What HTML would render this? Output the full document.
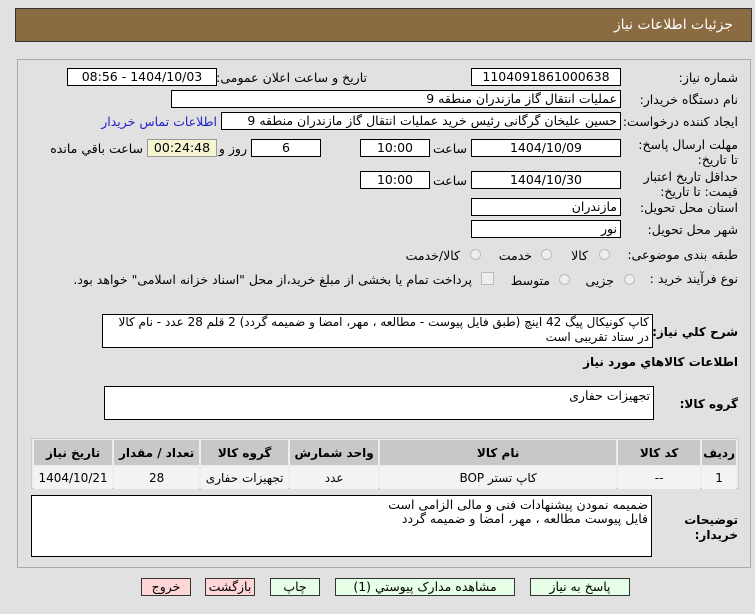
<!DOCTYPE html>
<html><head><meta charset="utf-8"><style>
body{margin:0;width:755px;height:614px;background:#e1e1e1;font-family:"DejaVu Sans","Liberation Sans",sans-serif;font-size:12.5px;color:#000;position:relative;overflow:hidden;direction:rtl}
.a{position:absolute}
.hdr{left:15px;top:8px;width:737px;height:34px;background:#8b6b42;border:1px solid #333;box-sizing:border-box;color:#fff;font-size:14px}
.panel{left:17px;top:59px;width:734px;height:509px;border:1px solid #aaa;box-sizing:border-box}
.box{background:#fff;border:1px solid #000;box-sizing:border-box;height:18px;line-height:16px;padding:0 3px;white-space:nowrap;overflow:hidden}
.c{text-align:center}
.lbl{white-space:nowrap;line-height:16px}
.b{font-weight:bold;font-size:12px}
.radio{width:11px;height:11px;border:1px solid #bbb;border-radius:50%;background:#eee;box-sizing:border-box}
table{border-collapse:separate;border-spacing:2px;font-size:12px}
td{text-align:center;background:#f3f3f3;height:20px}
th{background:#c8c8c8;height:23px;font-weight:bold}
.btn{height:18px;border:1px solid #333;box-sizing:border-box;text-align:center;line-height:16px;background:#e6ffe6}
.red{background:#ffd6d6}
</style></head><body>
<div class="a hdr"><span class="a" style="right:18px;top:8px">جزئیات اطلاعات نیاز</span></div>
<div class="a panel"></div>

<div class="a lbl" style="right:17px;top:70px">شماره نیاز:</div>
<div class="a box c" style="left:471px;top:68px;width:150px">1104091861000638</div>
<div class="a lbl" style="right:388px;top:70px">تاریخ و ساعت اعلان عمومی:</div>
<div class="a box c" style="left:67px;top:68px;width:150px">1404/10/03 - 08:56</div>

<div class="a lbl" style="right:17px;top:92px">نام دستگاه خریدار:</div>
<div class="a box" style="left:171px;top:90px;width:450px">عملیات انتقال گاز مازندران منطقه 9</div>

<div class="a lbl" style="right:17px;top:114px">ایجاد کننده درخواست:</div>
<div class="a box" style="left:221px;top:112px;width:400px">حسین علیخان گرگانی رئیس خرید عملیات انتقال گاز مازندران منطقه 9</div>
<div class="a lbl" style="right:538px;top:114px;color:#2222cc">اطلاعات تماس خریدار</div>

<div class="a lbl" style="right:17px;top:137px;width:110px;line-height:15px;white-space:normal">مهلت ارسال پاسخ: تا تاریخ:</div>
<div class="a box c" style="left:471px;top:139px;width:150px">1404/10/09</div>
<div class="a lbl" style="right:288px;top:141px">ساعت</div>
<div class="a box c" style="left:360px;top:139px;width:70px">10:00</div>
<div class="a box c" style="left:251px;top:139px;width:70px">6</div>
<div class="a lbl" style="right:508px;top:141px">روز و</div>
<div class="a box c" style="left:147px;top:139px;width:70px;background:#f5f5d2;border-color:#999">00:24:48</div>
<div class="a lbl" style="right:612px;top:141px">ساعت باقي مانده</div>

<div class="a lbl" style="right:17px;top:169px;width:110px;line-height:15px;white-space:normal">حداقل تاریخ اعتبار قیمت: تا تاریخ:</div>
<div class="a box c" style="left:471px;top:171px;width:150px">1404/10/30</div>
<div class="a lbl" style="right:288px;top:173px">ساعت</div>
<div class="a box c" style="left:360px;top:171px;width:70px">10:00</div>

<div class="a lbl" style="right:17px;top:200px">استان محل تحویل:</div>
<div class="a box" style="left:471px;top:198px;width:150px">مازندران</div>
<div class="a lbl" style="right:17px;top:222px">شهر محل تحویل:</div>
<div class="a box" style="left:471px;top:220px;width:150px">نور</div>

<div class="a lbl" style="right:17px;top:247px">طبقه بندی موضوعی:</div>
<div class="a radio" style="left:599px;top:249px"></div><div class="a lbl" style="right:167px;top:248px">کالا</div>
<div class="a radio" style="left:541px;top:249px"></div><div class="a lbl" style="right:223px;top:248px">خدمت</div>
<div class="a radio" style="left:470px;top:249px"></div><div class="a lbl" style="right:295px;top:248px">کالا/خدمت</div>

<div class="a lbl" style="right:17px;top:271px">نوع فرآیند خرید :</div>
<div class="a radio" style="left:624px;top:274px"></div><div class="a lbl" style="right:141px;top:273px">جزیی</div>
<div class="a radio" style="left:559px;top:274px"></div><div class="a lbl" style="right:205px;top:273px">متوسط</div>
<div class="a" style="left:481px;top:272px;width:11px;height:11px;border:1px solid #bbb;background:#eee"></div>
<div class="a lbl" style="right:283px;top:272px">پرداخت تمام یا بخشی از مبلغ خرید،از محل "اسناد خزانه اسلامی" خواهد بود.</div>

<div class="a lbl b" style="right:17px;top:324px">شرح کلي نیاز:</div>
<div class="a box" style="left:102px;top:314px;width:551px;height:34px;white-space:normal;line-height:15px;font-size:12px">کاپ کونیکال پیگ 42 اینچ (طبق فایل پیوست - مطالعه ، مهر، امضا و ضمیمه گردد) 2 قلم 28 عدد - نام کالا در ستاد تقریبی است</div>
<div class="a lbl b" style="right:17px;top:354px">اطلاعات کالاهاي مورد نیاز</div>

<div class="a lbl b" style="right:17px;top:396px">گروه کالا:</div>
<div class="a box" style="left:104px;top:386px;width:550px;height:34px;line-height:18px">تجهیزات حفاری</div>

<div class="a" style="left:31px;top:438px;width:708px;height:51px;border:1px solid #ccc;box-sizing:border-box;background:#eee">
<table style="width:100%;margin:-1px 0 0 0">
<tr><th style="width:27px">ردیف</th><th style="width:80px">کد کالا</th><th style="width:234px">نام کالا</th><th style="width:86px">واحد شمارش</th><th style="width:85px">گروه کالا</th><th style="width:83px">تعداد / مقدار</th><th>تاریخ نیاز</th></tr>
<tr><td>1</td><td>--</td><td>کاپ تستر BOP</td><td>عدد</td><td>تجهیزات حفاری</td><td>28</td><td>1404/10/21</td></tr>
</table></div>

<div class="a lbl b" style="right:17px;top:513px;line-height:15px">توضیحات<br>خریدار:</div>
<div class="a box" style="left:31px;top:495px;width:621px;height:62px;white-space:normal;line-height:14px;padding-top:2px">ضمیمه نمودن پیشنهادات فنی و مالی الزامی است<br>فایل پیوست مطالعه ، مهر، امضا و ضمیمه گردد</div>

<div class="a btn" style="left:530px;top:578px;width:100px">پاسخ به نیاز</div>
<div class="a btn" style="left:335px;top:578px;width:180px">مشاهده مدارک پیوستي (1)</div>
<div class="a btn" style="left:270px;top:578px;width:50px">چاپ</div>
<div class="a btn red" style="left:205px;top:578px;width:50px">بازگشت</div>
<div class="a btn red" style="left:141px;top:578px;width:50px">خروج</div>
</body></html>
